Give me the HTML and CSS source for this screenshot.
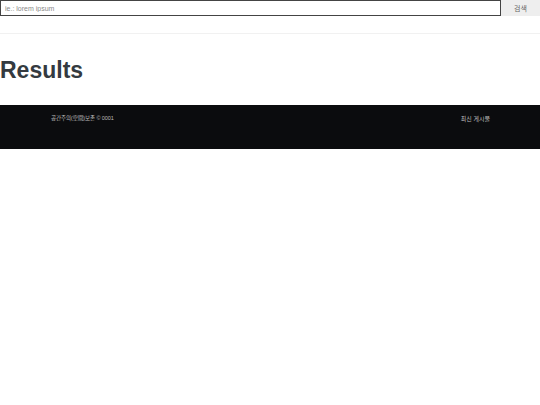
FILE: index.html
```html
<!DOCTYPE html>
<html lang="ko">
<head>
  <meta charset="UTF-8">
  <meta name="viewport" content="width=device-width, initial-scale=1.0">
  <title>Results</title>
  <link rel="stylesheet" href="styles.css">
</head>
<body>
  <form class="search-bar">
    <input class="search-input" type="text" placeholder="ie.: lorem ipsum">
    <button class="search-button" type="button">검색</button>
  </form>
  <hr class="divider">
  <h1 class="title">Results</h1>
  <footer class="footer">
    <span class="footer-copy">공간주의(空間)보존 © 0001</span>
    <a class="footer-link" href="#">최신 게시물</a>
  </footer>
</body>
</html>
```

FILE: styles.css
```css
body {
  margin: 0;
  font-family: 'Liberation Sans', Arial, 'Noto Sans CJK KR', sans-serif;
  background: #fff;
  color: #333;
}
.search-bar {
  display: flex;
  height: 16px;
  margin: 0;
}
.search-input {
  flex: 1;
  box-sizing: border-box;
  height: 16px;
  margin: 0;
  padding: 0 4px;
  border: 1px solid #444;
  font-family: inherit;
  font-size: 7px;
  color: #333;
}
.search-input::placeholder {
  color: #8a8a8a;
}
.search-button {
  width: 39px;
  height: 16px;
  margin: 0;
  padding: 0;
  border: none;
  background: #eeeeee;
  font-family: inherit;
  font-size: 7px;
  color: #666;
}
.divider {
  margin: 17px 0 0;
  border: none;
  border-top: 1px solid #f1f1f1;
}
.title {
  margin: 22px 0 21px;
  font-size: 23px;
  line-height: 28px;
  font-weight: bold;
  color: #343a40;
}
.footer {
  display: flex;
  justify-content: space-between;
  align-items: flex-start;
  height: 44px;
  padding: 9px 50px 0 51px;
  box-sizing: border-box;
  background: #0b0c0e;
  font-size: 6px;
  color: #bbb;
}
.footer-copy {
  font-size: 5.5px;
  letter-spacing: -0.1px;
}
.footer-link {
  color: #bbb;
  text-decoration: none;
}
```
